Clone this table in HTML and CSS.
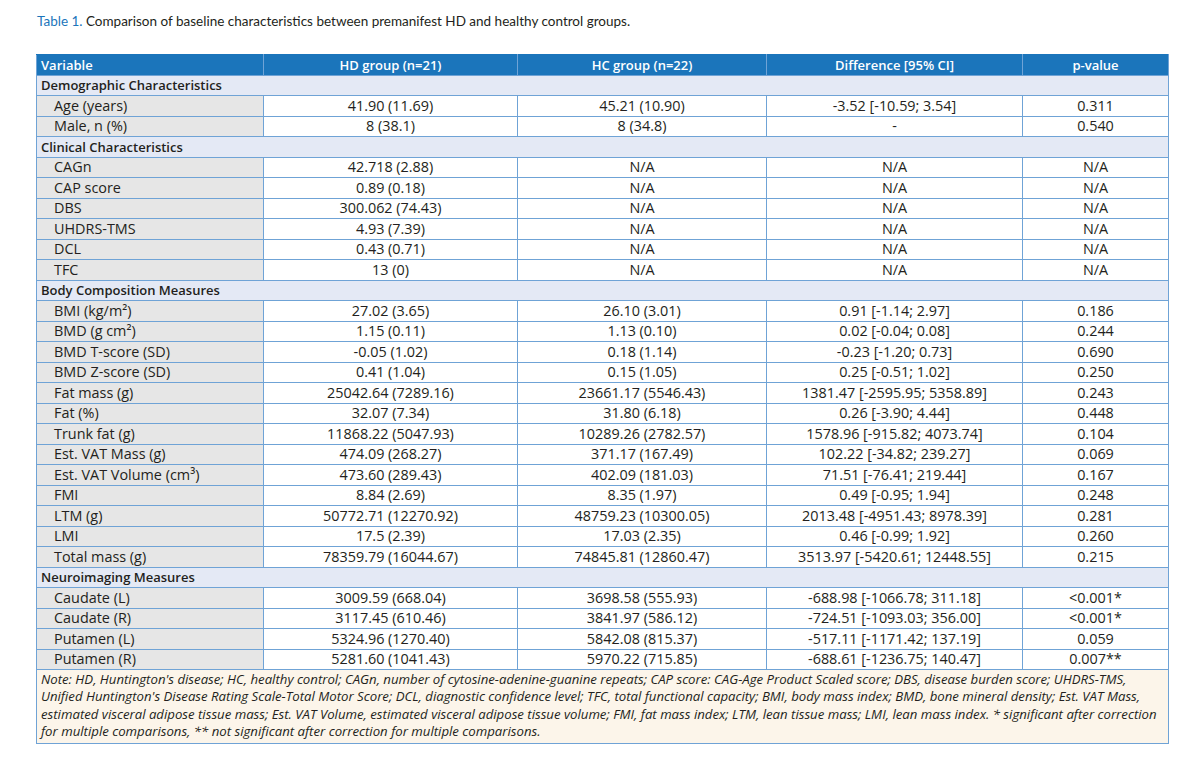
FILE: index.html
```html
<!DOCTYPE html>
<html lang="en">
<head>
    <meta charset="UTF-8">
    <meta name="viewport" content="width=device-width, initial-scale=1.0">
    <title>Table 1</title>
    <link rel="stylesheet" href="styles.css">
</head>
<body>

    <p class="caption"><span class="label">Table 1.</span> Comparison of baseline characteristics between premanifest HD and healthy control groups.</p>

    <table class="data">
        <colgroup>
            <col style="width: 227px;">
            <col style="width: 254px;">
            <col style="width: 249px;">
            <col style="width: 256px;">
            <col style="width: 146px;">
        </colgroup>
        <thead>
            <tr>
                <th class="first">Variable</th>
                <th>HD group (n=21)</th>
                <th>HC group (n=22)</th>
                <th>Difference [95% CI]</th>
                <th>p-value</th>
            </tr>
        </thead>
        <tbody>
            <tr class="section"><td colspan="5">Demographic Characteristics</td></tr>
            <tr><td class="name">Age (years)</td><td>41.90 (11.69)</td><td>45.21 (10.90)</td><td>-3.52 [-10.59; 3.54]</td><td>0.311</td></tr>
            <tr><td class="name">Male, n (%)</td><td>8 (38.1)</td><td>8 (34.8)</td><td>-</td><td>0.540</td></tr>

            <tr class="section"><td colspan="5">Clinical Characteristics</td></tr>
            <tr><td class="name">CAGn</td><td>42.718 (2.88)</td><td>N/A</td><td>N/A</td><td>N/A</td></tr>
            <tr><td class="name">CAP score</td><td>0.89 (0.18)</td><td>N/A</td><td>N/A</td><td>N/A</td></tr>
            <tr><td class="name">DBS</td><td>300.062 (74.43)</td><td>N/A</td><td>N/A</td><td>N/A</td></tr>
            <tr><td class="name">UHDRS-TMS</td><td>4.93 (7.39)</td><td>N/A</td><td>N/A</td><td>N/A</td></tr>
            <tr><td class="name">DCL</td><td>0.43 (0.71)</td><td>N/A</td><td>N/A</td><td>N/A</td></tr>
            <tr><td class="name">TFC</td><td>13 (0)</td><td>N/A</td><td>N/A</td><td>N/A</td></tr>

            <tr class="section"><td colspan="5">Body Composition Measures</td></tr>
            <tr><td class="name">BMI (kg/m²)</td><td>27.02 (3.65)</td><td>26.10 (3.01)</td><td>0.91 [-1.14; 2.97]</td><td>0.186</td></tr>
            <tr><td class="name">BMD (g cm²)</td><td>1.15 (0.11)</td><td>1.13 (0.10)</td><td>0.02 [-0.04; 0.08]</td><td>0.244</td></tr>
            <tr><td class="name">BMD T-score (SD)</td><td>-0.05 (1.02)</td><td>0.18 (1.14)</td><td>-0.23 [-1.20; 0.73]</td><td>0.690</td></tr>
            <tr><td class="name">BMD Z-score (SD)</td><td>0.41 (1.04)</td><td>0.15 (1.05)</td><td>0.25 [-0.51; 1.02]</td><td>0.250</td></tr>
            <tr><td class="name">Fat mass (g)</td><td>25042.64 (7289.16)</td><td>23661.17 (5546.43)</td><td>1381.47 [-2595.95; 5358.89]</td><td>0.243</td></tr>
            <tr><td class="name">Fat (%)</td><td>32.07 (7.34)</td><td>31.80 (6.18)</td><td>0.26 [-3.90; 4.44]</td><td>0.448</td></tr>
            <tr><td class="name">Trunk fat (g)</td><td>11868.22 (5047.93)</td><td>10289.26 (2782.57)</td><td>1578.96 [-915.82; 4073.74]</td><td>0.104</td></tr>
            <tr><td class="name">Est. VAT Mass (g)</td><td>474.09 (268.27)</td><td>371.17 (167.49)</td><td>102.22 [-34.82; 239.27]</td><td>0.069</td></tr>
            <tr><td class="name">Est. VAT Volume (cm³)</td><td>473.60 (289.43)</td><td>402.09 (181.03)</td><td>71.51 [-76.41; 219.44]</td><td>0.167</td></tr>
            <tr><td class="name">FMI</td><td>8.84 (2.69)</td><td>8.35 (1.97)</td><td>0.49 [-0.95; 1.94]</td><td>0.248</td></tr>
            <tr><td class="name">LTM (g)</td><td>50772.71 (12270.92)</td><td>48759.23 (10300.05)</td><td>2013.48 [-4951.43; 8978.39]</td><td>0.281</td></tr>
            <tr><td class="name">LMI</td><td>17.5 (2.39)</td><td>17.03 (2.35)</td><td>0.46 [-0.99; 1.92]</td><td>0.260</td></tr>
            <tr><td class="name">Total mass (g)</td><td>78359.79 (16044.67)</td><td>74845.81 (12860.47)</td><td>3513.97 [-5420.61; 12448.55]</td><td>0.215</td></tr>

            <tr class="section"><td colspan="5">Neuroimaging Measures</td></tr>
            <tr><td class="name">Caudate (L)</td><td>3009.59 (668.04)</td><td>3698.58 (555.93)</td><td>-688.98 [-1066.78; 311.18]</td><td>&lt;0.001*</td></tr>
            <tr><td class="name">Caudate (R)</td><td>3117.45 (610.46)</td><td>3841.97 (586.12)</td><td>-724.51 [-1093.03; 356.00]</td><td>&lt;0.001*</td></tr>
            <tr><td class="name">Putamen (L)</td><td>5324.96 (1270.40)</td><td>5842.08 (815.37)</td><td>-517.11 [-1171.42; 137.19]</td><td>0.059</td></tr>
            <tr><td class="name">Putamen (R)</td><td>5281.60 (1041.43)</td><td>5970.22 (715.85)</td><td>-688.61 [-1236.75; 140.47]</td><td>0.007**</td></tr>
        </tbody>
        <tfoot>
            <tr>
                <td colspan="5" class="note">
                    Note: HD, Huntington's disease; HC, healthy control; CAGn, number of cytosine-adenine-guanine repeats; CAP score: CAG-Age Product Scaled score; DBS, disease burden score; UHDRS-TMS,<br>
                    Unified Huntington's Disease Rating Scale-Total Motor Score; DCL, diagnostic confidence level; TFC, total functional capacity; BMI, body mass index; BMD, bone mineral density; Est. VAT Mass,<br>
                    estimated visceral adipose tissue mass; Est. VAT Volume, estimated visceral adipose tissue volume; FMI, fat mass index; LTM, lean tissue mass; LMI, lean mass index. * significant after correction<br>
                    for multiple comparisons, ** not significant after correction for multiple comparisons.
                </td>
            </tr>
        </tfoot>
    </table>

</body>
</html>
```

FILE: styles.css
```css
body {
    margin: 0;
    padding: 13px 0 0 36px;
    font-family: "Open Sans", "Liberation Sans", sans-serif;
    color: #231f20;
    background-color: #ffffff;
}
.caption {
    margin: 0 0 25px 1px;
    font-family: Lato, "Liberation Sans", sans-serif;
    font-size: 13.5px;
    line-height: 16px;
}
.caption .label {
    color: #1b75bb;
}
.data {
    border-collapse: collapse;
    table-layout: fixed;
    width: 1132px;
    font-size: 14.4px;
}
.data th,
.data td {
    border: 1px solid #6fa3d6;
    height: 19.5px;
    padding: 0 4px;
    text-align: center;
    line-height: 16px;
    white-space: nowrap;
}
.data th {
    background-color: #1b75bb;
    color: #ffffff;
    font-size: 13px;
    font-weight: 600;
    border-color: #6fa3d6;
    border-top-color: #1b75bb;
}
.data th.first {
    text-align: left;
}
.section td {
    background-color: #e4e9f5;
    font-size: 13px;
    font-weight: 600;
    text-align: left;
}
.data td.name {
    background-color: #e6e6e6;
    text-align: left;
    padding-left: 17px;
}
.data td.note {
    background-color: #fcf5ea;
    text-align: left;
    font-style: italic;
    font-size: 13.2px;
    line-height: 17.3px;
    padding: 1px 4px 3px;
    white-space: nowrap;
    height: auto;
}
```
